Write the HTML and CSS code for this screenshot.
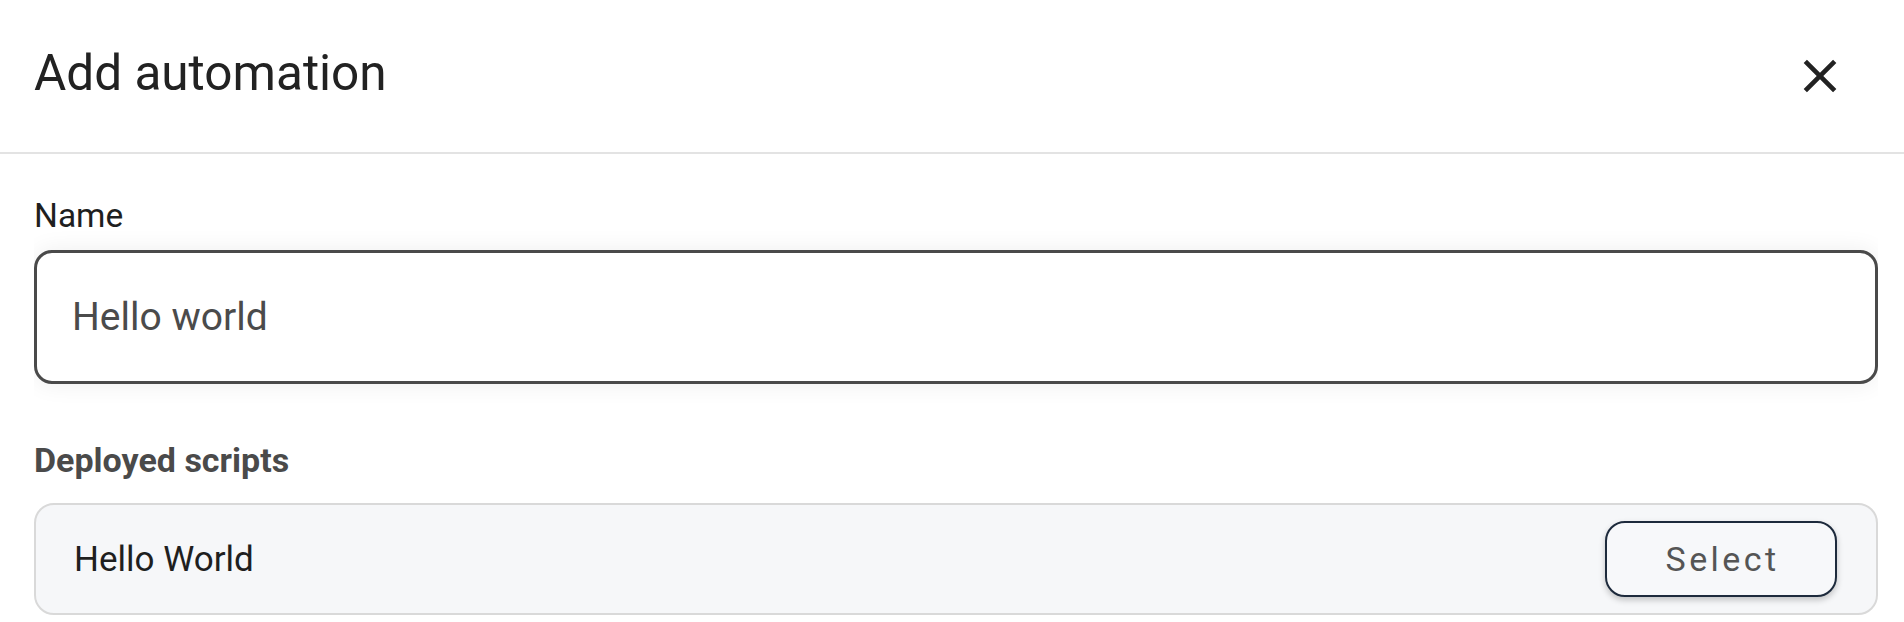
FILE: index.html
```html
<!DOCTYPE html>
<html lang="en">
<head>
<meta charset="utf-8">
<title>Add automation</title>
<link rel="stylesheet" href="styles.css">
</head>
<body>
<div class="dialog">
  <header class="header">
    <h1 class="title">Add automation</h1>
    <button class="close" aria-label="Close">
      <svg viewBox="0 0 24 24" width="56" height="56"><path fill="#222" d="M19 6.41L17.59 5 12 10.59 6.41 5 5 6.41 10.59 12 5 17.59 6.41 19 12 13.41 17.59 19 19 17.59 13.41 12z"/></svg>
    </button>
  </header>
  <main class="body">
    <label class="label" for="name">Name</label>
    <input id="name" class="field" type="text" value="Hello world">
    <h2 class="section">Deployed scripts</h2>
    <div class="card">
      <span class="card-name">Hello World</span>
      <button class="select">Select</button>
    </div>
  </main>
</div>
</body>
</html>
```
FILE: styles.css
```css
* { box-sizing: border-box; }
html, body { margin: 0; background: #fff; }
body { font-family: Roboto, "Noto Sans", Arial, sans-serif; color: #212121; }

.header {
  height: 154px;
  display: flex;
  align-items: center;
  justify-content: space-between;
  padding: 0 56px 5px 34px;
  border-bottom: 2px solid #e3e3e3;
}
.title {
  margin: 0;
  font-size: 49.5px;
  font-weight: 400;
  line-height: 1.2;
  color: #222;
}
.close {
  width: 56px;
  height: 56px;
  padding: 0;
  margin-top: 5px;
  border: 0;
  background: none;
  display: flex;
}

.body {
  padding: 44px 26px 0 34px;
  display: flex;
  flex-direction: column;
}
.label {
  font-size: 33.5px;
  line-height: 36px;
  color: #1f1f1f;
}
.field {
  margin-top: 16px;
  height: 134px;
  width: 100%;
  border: 3px solid #4a4a4a;
  border-radius: 18px;
  padding: 0 35px;
  font-family: inherit;
  font-size: 39px;
  color: #4b4b4b;
  background: #fff;
  outline: none;
  box-shadow: 0 0 24px rgba(0, 0, 0, 0.07);
  clip-path: inset(-40px 0 -40px 0);
}
.section {
  margin: 57px 0 0;
  font-size: 34px;
  line-height: 38px;
  font-weight: 700;
  color: #4a4a4a;
}
.card {
  margin-top: 24px;
  height: 112px;
  display: flex;
  align-items: center;
  justify-content: space-between;
  padding: 0 39px 0 38px;
  border: 2px solid #d9d9d9;
  border-radius: 20px;
  background: #f6f7f9;
}
.card-name {
  font-size: 35px;
  color: #1f1f1f;
}
.select {
  width: 232px;
  height: 76px;
  border: 2px solid #1d2a3c;
  border-radius: 20px;
  background: #f7f8fa;
  font-family: inherit;
  font-size: 34px;
  letter-spacing: 3.4px;
  padding: 0 0 0 3px;
  color: #555;
  box-shadow: 0 3px 6px rgba(0, 0, 0, 0.22);
}
```
